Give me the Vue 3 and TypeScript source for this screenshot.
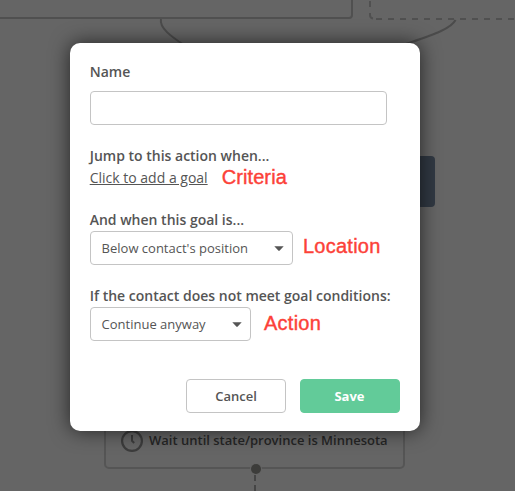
<script setup lang="ts">
import { ref } from 'vue'

const name = ref('')
const position = 'Below contact\'s position'
const fallback = 'Continue anyway'
</script>

<template>
  <div class="screen">
    <svg class="canvas" width="515" height="491" viewBox="0 0 515 491" fill="none">
      <rect x="-10" y="-40" width="362" height="58" rx="3" stroke="#505050" stroke-width="2" />
      <path d="M370 1V7M370 13V15Q370 18 373 18.500" stroke="#505050" stroke-width="2" />
      <path d="M376 19H520" stroke="#505050" stroke-width="2" stroke-dasharray="6 6" />
      <path d="M161 19C159 28 172 37 184 45" stroke="#4b4b4b" stroke-width="2" />
      <path d="M455.500 20C451 29 432 35 406 44" stroke="#4b4b4b" stroke-width="2" />
      <rect x="380" y="156" width="55" height="51" rx="4" fill="#313943" />
      <rect x="105" y="400" width="299" height="68" rx="4" stroke="#555" stroke-width="2" />
      <circle cx="132" cy="441" r="9.900" stroke="#3c3c3c" stroke-width="2.200" />
      <path d="M132 435V440.800L134.200 443" stroke="#3c3c3c" stroke-width="2" />
      <text class="node-text" x="149" y="445">Wait until state/province is Minnesota</text>
      <path d="M255 475V481M255 485V491" stroke="#454545" stroke-width="2" />
      <circle cx="256" cy="469" r="6" fill="#646464" />
      <circle cx="256" cy="469" r="5" fill="#3c3c3a" />
    </svg>

    <form class="modal" @submit.prevent>
      <label class="label" for="goal-name">Name</label>
      <input id="goal-name" v-model="name" class="field" type="text" />

      <div class="group">
        <div class="label">Jump to this action when...</div>
        <div class="row">
          <a class="link">Click to add a goal</a>
          <span class="note criteria">Criteria</span>
        </div>
      </div>

      <div class="group">
        <div class="label">And when this goal is...</div>
        <div class="row">
          <div class="select wide">
            <span>{{ position }}</span>
            <svg class="arrow" width="10" height="6" viewBox="0 0 10 6"><path d="M.3 .3H9.700L5.700 4.600Q5 5.300 4.300 4.600Z" fill="#555" /></svg>
          </div>
          <span class="note location">Location</span>
        </div>
      </div>

      <div class="group">
        <div class="label">If the contact does not meet goal conditions:</div>
        <div class="row">
          <div class="select narrow">
            <span>{{ fallback }}</span>
            <svg class="arrow" width="10" height="6" viewBox="0 0 10 6"><path d="M.3 .3H9.700L5.700 4.600Q5 5.300 4.300 4.600Z" fill="#555" /></svg>
          </div>
          <span class="note action">Action</span>
        </div>
      </div>

      <div class="buttons">
        <button class="button cancel" type="button">Cancel</button>
        <button class="button save" type="submit">Save</button>
      </div>
    </form>
  </div>
</template>

<style>
body {
  margin: 0;
}
</style>

<style scoped>
.screen {
  position: relative;
  width: 515px;
  height: 491px;
  overflow: hidden;
  background: #656565;
  font-family: "Open Sans", sans-serif;
  color: #555;
}
.canvas {
  display: block;
}
.node-text {
  font-size: 13px;
  font-weight: 600;
  fill: #252525;
}
.modal {
  position: absolute;
  left: 70px;
  top: 43px;
  box-sizing: border-box;
  width: 350px;
  height: 388px;
  padding: 18px 20px;
  border-radius: 10px;
  background: #fff;
  box-shadow: 0 0 20px rgba(0, 0, 0, 0.65);
}
.label {
  display: block;
  margin-left: -0.3px;
  font-size: 14px;
  font-weight: 600;
  line-height: 22px;
  white-space: nowrap;
}
.field {
  display: block;
  box-sizing: border-box;
  width: 297px;
  height: 34px;
  margin-top: 8px;
  padding: 0 10px;
  border: 1px solid #c4c4c4;
  border-radius: 4px;
  outline: none;
  background: #fff;
  font: inherit;
}
.group {
  margin-top: 20px;
}
.row {
  display: flex;
  align-items: center;
}
.link {
  margin-left: -0.3px;
  font-size: 14px;
  line-height: 22px;
  text-decoration: underline;
}
.note {
  font-family: "Liberation Sans", Arial, sans-serif;
  font-size: 20px;
  line-height: 20px;
  letter-spacing: 0.1px;
  color: #fc4138;
  -webkit-text-stroke: 0.4px #fc4138;
}
.criteria {
  margin-left: 14px;
  margin-bottom: 2px;
}
.location {
  margin-left: 10px;
  margin-bottom: 4px;
  letter-spacing: 0.25px;
}
.action {
  margin-left: 13px;
  margin-bottom: 2px;
  letter-spacing: 0.25px;
}
.select {
  display: flex;
  align-items: center;
  justify-content: space-between;
  box-sizing: border-box;
  height: 34px;
  padding: 0 8px 0 10.6px;
  border: 1px solid #c4c4c4;
  border-radius: 4px;
  font-size: 13px;
}
.arrow {
  margin-top: 2px;
}
.wide {
  width: 203px;
}
.narrow {
  width: 161px;
}
.buttons {
  display: flex;
  justify-content: flex-end;
  gap: 14px;
  margin-top: 38px;
}
.button {
  box-sizing: border-box;
  width: 100px;
  height: 34px;
  padding: 0;
  border: 1px solid #c4c4c4;
  border-radius: 4px;
  background: #fff;
  font: 600 13px "Open Sans", sans-serif;
  color: #555;
}
.save {
  padding-right: 1px;
  border-color: #62cb99;
  background: #62cb99;
  font-weight: 700;
  color: #fff;
}
</style>
